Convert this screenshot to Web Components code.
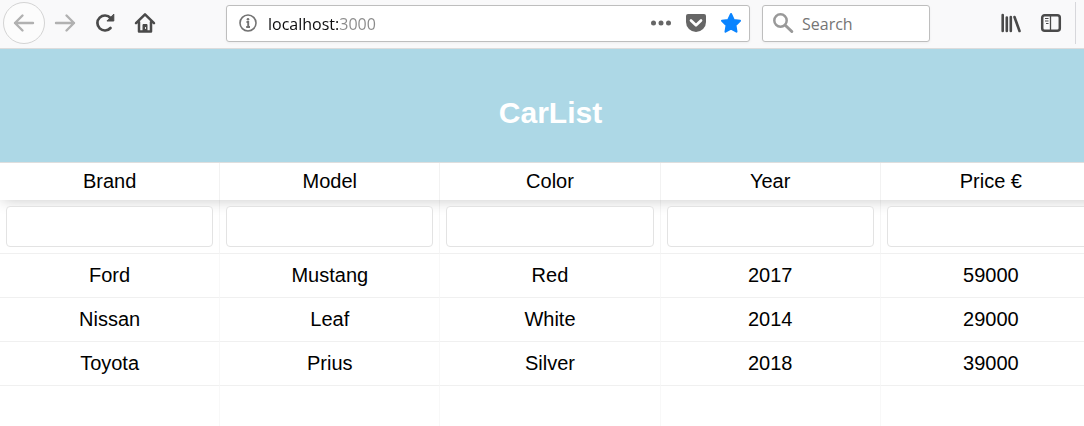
<!DOCTYPE html>
<html lang="en">
<head>
<meta charset="utf-8">
<title>CarList</title>
<style>
  html, body { margin: 0; min-height: 100%; background: #fff; overflow: hidden; }
  body { display: flex; flex-direction: column; min-height: 100vh; font-family: "Liberation Sans", Arial, sans-serif; color: #000; }
</style>
</head>
<body>
<browser-bar></browser-bar>
<car-app>
  <page-header slot="header">CarList</page-header>
  <car-table></car-table>
</car-app>

<template id="bar">
  <style>
    :host { display: block; background: #f9f9fa; border-bottom: 1px solid #dcdcdc; font-family: "Open Sans", "Segoe UI", sans-serif; }
    .bar { display: flex; align-items: center; height: 48px; padding: 0 8px 2px 3px; box-sizing: border-box; }
    button { display: grid; place-items: center; flex: none; width: 40px; height: 40px; margin: 0; padding: 0; border: 0; background: none; }
    svg { display: block; }
    .back { width: 42px; height: 42px; border: 1px solid #d4d4d4; border-radius: 50%; background: #fcfcfc; }
    .field { display: flex; align-items: center; height: 37px; box-sizing: border-box; border: 1px solid #bebebe; border-radius: 3px; background: #fff; box-shadow: 0 1px 3px rgba(0,0,0,.05); }
    .url { flex: 1; min-width: 0; margin-left: 61px; padding-right: 1px; }
    .search { width: 168px; flex: none; margin-left: 12px; }
    .field button { width: 35px; height: 35px; }
    .field .info { width: 41px; }
    .field .find { width: 39px; }
    input { flex: 1; min-width: 0; height: 35px; padding: 2px 0 0; box-sizing: border-box; border: 0; outline: 0; background: none; font: 16px/24px "Open Sans", "Segoe UI", sans-serif; color: #000; }
    .address { color: transparent; background-image: linear-gradient(90deg, #0c0c0d 72px, #8a8a8a 72px); -webkit-background-clip: text; background-clip: text; }
    input::placeholder { color: #757575; opacity: 1; }
    .tools { display: flex; align-items: center; margin-left: 61px; }
    .tools i { width: 1px; height: 42px; margin-left: 4px; background: #d7d7db; }
  </style>
  <nav class="bar" aria-label="Browser">
    <button class="back" aria-label="Back"><svg width="22" height="22" viewBox="0 0 22 22" fill="none" stroke="#b1b1b1" stroke-width="2.4" stroke-linecap="round" stroke-linejoin="round"><path d="M20 11H2M9.500 3.500 2 11l7.500 7.500"/></svg></button>
    <button aria-label="Forward"><svg width="22" height="22" viewBox="0 0 22 22" fill="none" stroke="#b1b1b1" stroke-width="2.400" stroke-linecap="round" stroke-linejoin="round"><path d="M2 11h18M12.500 3.500 20 11l-7.500 7.500"/></svg></button>
    <button aria-label="Reload"><svg width="22" height="22" viewBox="0 0 22 22" fill="none" stroke="#4a4a4a" stroke-width="2.700" stroke-linecap="round"><path d="M16.500 16A7.500 7.500 0 1 1 16.500 6"/><path d="M19.800 2.500v6.500h-6.500z" fill="#4a4a4a" stroke-width="1" stroke-linejoin="round"/></svg></button>
    <button aria-label="Home"><svg width="22" height="22" viewBox="0 0 22 22" fill="none" stroke="#4a4a4a" stroke-width="2.500" stroke-linecap="round" stroke-linejoin="round"><path d="M2 11.200 11 2.300l9 8.900M5 10v9.500h12V10"/><path d="M9 19v-6.500h4V19" fill="#4a4a4a" stroke-width="1"/><path d="M11.500 15.500v1" stroke="#f9f9fa" stroke-width="1"/></svg></button>
    <div class="field url">
      <button class="info" aria-label="Site information"><svg width="18" height="18" viewBox="0 0 18 18" fill="none" stroke="#737373"><circle cx="9" cy="9" r="8" stroke-width="1.600"/><path d="M7.500 8h1.700v5M7.200 13h3.800" stroke-width="1.900"/><circle cx="9" cy="5.200" r="1.300" fill="#737373" stroke="none"/></svg></button>
      <input class="address" type="text" aria-label="Address" value="localhost:3000" spellcheck="false">
      <button aria-label="Page actions"><svg width="22" height="22" viewBox="0 0 22 22" fill="#666"><circle cx="3.500" cy="11" r="2.500"/><circle cx="11" cy="11" r="2.500"/><circle cx="18.500" cy="11" r="2.500"/></svg></button>
      <button aria-label="Save to Pocket"><svg width="22" height="22" viewBox="0 0 22 22"><path d="M3 2h16a2 2 0 0 1 2 2v6a10 10 0 0 1-20 0V4a2 2 0 0 1 2-2z" fill="#666"/><path d="M6 8.500l5 4.800 5-4.800" fill="none" stroke="#fff" stroke-width="2.700" stroke-linecap="round" stroke-linejoin="round"/></svg></button>
      <button aria-label="Bookmark"><svg width="22" height="22" viewBox="0 0 22 22"><path d="M11 2l2.800 5.900 6.200.9-4.500 4.500 1 6.400L11 16.700l-5.500 3 1-6.400L2 8.800l6.200-.9z" fill="#0a84ff" stroke="#0a84ff" stroke-width="2" stroke-linejoin="round"/></svg></button>
    </div>
    <div class="field search">
      <button class="find" aria-label="Search"><svg width="22" height="22" viewBox="0 0 22 22" fill="none" stroke="#999"><circle cx="8.500" cy="8.500" r="6.200" stroke-width="2.500"/><path d="M13.500 13.500l6.300 6" stroke-width="3" stroke-linecap="round"/></svg></button>
      <input type="text" aria-label="Search the web" placeholder="Search">
    </div>
    <div class="tools">
      <button aria-label="Library"><svg width="22" height="22" viewBox="0 0 22 22" fill="none" stroke="#4a4a4a" stroke-width="2.600" stroke-linecap="round"><path d="M2.700 3v16M6.800 5.500V19M10.800 5v14M14.500 5l5 14"/></svg></button>
      <button aria-label="Sidebars"><svg width="22" height="22" viewBox="0 0 22 22" fill="none" stroke="#4a4a4a"><rect x="2.200" y="3.200" width="17.600" height="15.600" rx="2.500" stroke-width="2.500"/><path d="M10.500 3.500v15" stroke-width="1.300"/><path d="M5 6.500h3.500M5 9h3.500M6 11.500h2.500" stroke-width="1.200"/></svg></button>
      <i></i>
    </div>
  </nav>
</template>

<template id="app">
  <style>
    :host { display: flex; flex-direction: column; flex: 1; width: calc(100% + 17px); }
    ::slotted(car-table) { flex: 1; }
  </style>
  <slot name="header"></slot>
  <slot></slot>
</template>

<template id="head">
  <style>
    :host { display: block; position: relative; z-index: 1; background: #add8e6; color: #fff; padding: 47px 20px 32px; border-bottom: 1px solid #dedede; text-align: center; }
    h1 { margin: 0; font-size: 30px; line-height: 34px; font-weight: 700; }
  </style>
  <h1><slot></slot></h1>
</template>

<template id="cars">
  <style>
    :host { display: flex; }
    table { flex: 1; width: 100%; border-collapse: separate; border-spacing: 0; table-layout: fixed; font-size: 20px; line-height: 24px; }
    th, td { box-sizing: border-box; padding: 0; font-weight: 400; text-align: center; border-right: 1px solid #f8f8f8; }
    th:last-child, td:last-child { border-right: 0; }
    .titles { box-shadow: 2px 0 15px rgba(0,0,0,.22); }
    .titles th { height: 37px; padding-bottom: 2px; border-right-color: #f2f2f2; }
    .filters th { height: 54px; padding: 0 6px; border-right-color: rgba(0,0,0,.04); border-bottom: 1px solid #f0f0f0; }
    input { display: block; width: 100%; height: 41px; box-sizing: border-box; padding: 5px 8px; border: 1px solid #e3e3e3; border-radius: 4px; background: #fff; font: inherit; text-align: center; outline: 0; }
    tbody td { height: 44px; padding-bottom: 1px; border-bottom: 1px solid #f0f0f0; }
    tbody .rest td { height: auto; border-bottom: 0; }
  </style>
  <table>
    <thead></thead>
    <tbody></tbody>
  </table>
</template>

<script>
  class Base extends HTMLElement {
    constructor() {
      super();
      const source = document.getElementById(this.constructor.template);
      this.attachShadow({ mode: 'open' }).append(source.content.cloneNode(true));
    }
  }
  class BrowserBar extends Base { static template = 'bar'; }
  class CarApp extends Base { static template = 'app'; }
  class PageHeader extends Base { static template = 'head'; }
  class CarTable extends Base {
    static template = 'cars';
    connectedCallback() {
      const columns = ['Brand', 'Model', 'Color', 'Year', 'Price €'];
      const cars = [
        ['Ford', 'Mustang', 'Red', 2017, 59000],
        ['Nissan', 'Leaf', 'White', 2014, 29000],
        ['Toyota', 'Prius', 'Silver', 2018, 39000]
      ];
      this.shadowRoot.querySelector('thead').innerHTML =
        `<tr class="titles">${columns.map(c => `<th scope="col">${c}</th>`).join('')}</tr>` +
        `<tr class="filters">${columns.map(c => `<th><input type="text" aria-label="Filter ${c}"></th>`).join('')}</tr>`;
      this.shadowRoot.querySelector('tbody').innerHTML =
        cars.map(car => `<tr>${car.map(v => `<td>${v}</td>`).join('')}</tr>`).join('') +
        `<tr class="rest">${columns.map(() => '<td></td>').join('')}</tr>`;
    }
  }
  customElements.define('browser-bar', BrowserBar);
  customElements.define('car-app', CarApp);
  customElements.define('page-header', PageHeader);
  customElements.define('car-table', CarTable);
</script>
</body>
</html>
